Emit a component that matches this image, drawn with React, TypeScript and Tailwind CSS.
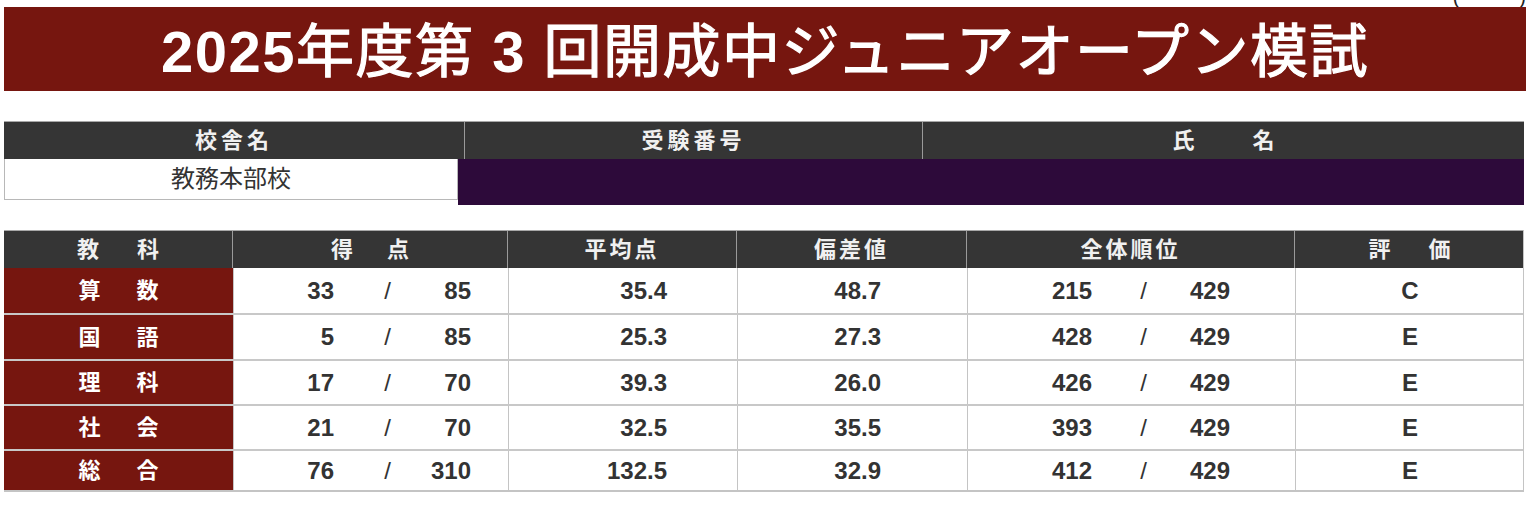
import React from "react";

type Row = {
  subject: [string, string];
  score: string;
  max: string;
  avg: string;
  dev: string;
  rank: string;
  total: string;
  grade: string;
  h: string;
};

const rows: Row[] = [
  { subject: ["算", "数"], score: "33", max: "85", avg: "35.4", dev: "48.7", rank: "215", total: "429", grade: "C", h: "h-[45px]" },
  { subject: ["国", "語"], score: "5", max: "85", avg: "25.3", dev: "27.3", rank: "428", total: "429", grade: "E", h: "h-[46px]" },
  { subject: ["理", "科"], score: "17", max: "70", avg: "39.3", dev: "26.0", rank: "426", total: "429", grade: "E", h: "h-[45px]" },
  { subject: ["社", "会"], score: "21", max: "70", avg: "32.5", dev: "35.5", rank: "393", total: "429", grade: "E", h: "h-[45px]" },
  { subject: ["総", "合"], score: "76", max: "310", avg: "132.5", dev: "32.9", rank: "412", total: "429", grade: "E", h: "h-[41px]" },
];

const font = "font-['Liberation_Sans','Noto_Sans_CJK_JP',sans-serif]";
const cols = "grid grid-cols-[229px_275px_229px_230px_328px_229px]";

function HeadCell({ children, last }: { children: React.ReactNode; last?: boolean }) {
  return (
    <div
      className={`flex items-center justify-center text-[22px] font-bold text-[#f0f0f0] ${
        last ? "" : "border-r border-[#9a9a9a]"
      }`}
    >
      {children}
    </div>
  );
}

function Spread({ a, b, gap }: { a: string; b: string; gap: string }) {
  return (
    <span className={`flex ${gap}`}>
      <span>{a}</span>
      <span>{b}</span>
    </span>
  );
}

export default function App() {
  return (
    <div className={`relative h-[506px] w-[1536px] overflow-hidden bg-white ${font}`}>
      {/* only the lower ends of a bracket pair show at the top edge */}
      <div className="flex h-[7px] items-end justify-end overflow-hidden pr-[10px]">
        <span className="whitespace-pre text-[20px] leading-none text-[#222]">(　　　)</span>
      </div>

      {/* title: latin digits bold, kana/kanji regular with a thin stroke */}
      <div className="ml-[4px] flex h-[84px] w-[1522px] items-center justify-center bg-[#76160f]">
        <h1 className="whitespace-pre text-[58px] leading-none tracking-[1.5px] text-white">
          <span className="font-bold">2025</span>
          <span className="font-['Noto_Sans_CJK_JP',sans-serif] [-webkit-text-stroke:1.2px_white]">年度第</span>
          <span className="font-bold"> 3 </span>
          <span className="font-['Noto_Sans_CJK_JP',sans-serif] [-webkit-text-stroke:1.2px_white]">
            回開成中ジュニアオープン模試
          </span>
        </h1>
      </div>

      {/* info table */}
      <div className="ml-[4px] mt-[30px] w-[1520px]">
        <div className="grid h-[38px] grid-cols-[461px_458px_601px] border-t border-[#a8a8a8] bg-[#353535]">
          <HeadCell>
            <span className="tracking-[4px]">校舎名</span>
          </HeadCell>
          <HeadCell>
            <span className="tracking-[4px]">受験番号</span>
          </HeadCell>
          <HeadCell last>
            <Spread a="氏" b="名" gap="gap-[58px]" />
          </HeadCell>
        </div>
        <div className="flex h-[47px] items-start">
          <div className="flex h-[41px] w-[454px] items-center justify-center border border-t-0 border-[#b8b8b8] text-[24px] text-[#333]">
            教務本部校
          </div>
          <div className="h-[46px] flex-1 bg-[#2d0a3a]" />
        </div>
      </div>

      {/* score table */}
      <div className="ml-[4px] mt-[24px] w-[1520px] border-b-2 border-r border-[#c4c4c4]">
        <div className={`${cols} h-[38px] border-t border-[#a8a8a8] bg-[#353535]`}>
          <HeadCell>
            <Spread a="教" b="科" gap="gap-[38px]" />
          </HeadCell>
          <HeadCell>
            <Spread a="得" b="点" gap="gap-[34px]" />
          </HeadCell>
          <HeadCell>
            <span className="tracking-[3px]">平均点</span>
          </HeadCell>
          <HeadCell>
            <span className="tracking-[3px]">偏差値</span>
          </HeadCell>
          <HeadCell>
            <span className="tracking-[3px]">全体順位</span>
          </HeadCell>
          <HeadCell last>
            <Spread a="評" b="価" gap="gap-[38px]" />
          </HeadCell>
        </div>

        {rows.map((r, i) => (
          <div
            key={r.subject.join("")}
            className={`${cols} ${r.h} ${i === 0 ? "" : "border-t-2 border-[#c8c8c8]"} text-[24px] font-bold text-[#333]`}
          >
            <div className="flex items-center justify-center bg-[#76160f] text-[22px] text-white">
              <Spread a={r.subject[0]} b={r.subject[1]} gap="gap-[36px]" />
            </div>
            <div className="flex items-center border-l border-[#c4c4c4]">
              <span className="w-[100px] text-right">{r.score}</span>
              <span className="w-[57px] text-right font-normal">/</span>
              <span className="w-[80px] text-right">{r.max}</span>
            </div>
            <div className="flex items-center justify-end border-l border-[#c4c4c4] pr-[70px]">{r.avg}</div>
            <div className="flex items-center justify-end border-l border-[#c4c4c4] pr-[86px]">{r.dev}</div>
            <div className="flex items-center border-l border-[#c4c4c4]">
              <span className="w-[124px] text-right">{r.rank}</span>
              <span className="w-[55px] text-right font-normal">/</span>
              <span className="w-[83px] text-right">{r.total}</span>
            </div>
            <div className="flex items-center justify-center border-l border-[#c4c4c4]">{r.grade}</div>
          </div>
        ))}
      </div>
    </div>
  );
}
